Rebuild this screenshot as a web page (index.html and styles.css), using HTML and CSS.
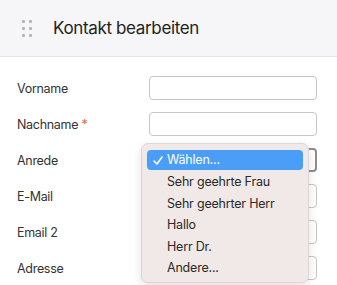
FILE: index.html
```html
<!DOCTYPE html>
<html lang="de">
<head>
    <meta charset="UTF-8" />
    <meta name="viewport" content="width=device-width, initial-scale=1.0"/>
    <title>Kontakt bearbeiten</title>
    <link rel="stylesheet" href="styles.css">
</head>
<body>
<header class="panel-head">
    <svg class="grip" width="10" height="18" viewBox="0 0 10 18">
        <rect x="0" y="0" width="3" height="3" rx="1"/>
        <rect x="7" y="0" width="3" height="3" rx="1"/>
        <rect x="0" y="7" width="3" height="3" rx="1"/>
        <rect x="7" y="7" width="3" height="3" rx="1"/>
        <rect x="0" y="14" width="3" height="3" rx="1"/>
        <rect x="7" y="14" width="3" height="3" rx="1"/>
    </svg>
    <h1>Kontakt bearbeiten</h1>
</header>

<form class="contact-form">
    <div class="row">
        <label for="firstName">Vorname</label>
        <input type="text" id="firstName">
    </div>
    <div class="row">
        <label for="lastName">Nachname <span class="req">*</span></label>
        <input type="text" id="lastName">
    </div>
    <div class="row">
        <label for="salutation">Anrede</label>
        <div class="select-box focused" id="salutation"></div>
        <ul class="menu">
            <li class="active">
                <svg class="check" width="10" height="9" viewBox="0 0 10 9"><path d="M1 5 L4 8 L9 1"/></svg>Wählen...
            </li>
            <li>Sehr geehrte Frau</li>
            <li>Sehr geehrter Herr</li>
            <li>Hallo</li>
            <li>Herr Dr.</li>
            <li>Andere...</li>
        </ul>
    </div>
    <div class="row">
        <label for="email">E-Mail</label>
        <input type="text" id="email">
    </div>
    <div class="row">
        <label for="email2">Email 2</label>
        <input type="text" id="email2">
    </div>
    <div class="row">
        <label for="address">Adresse</label>
        <input type="text" id="address">
    </div>
</form>
</body>
</html>
```

FILE: styles.css
```css
body {
    font-family: 'Inter', 'Liberation Sans', sans-serif;
    margin: 0;
    padding: 0;
    background-color: #fff;
    color: #333;
    overflow: hidden;
}

.panel-head {
    height: 56px;
    background-color: #f6f6f8;
    border-bottom: 1px solid #e6e6e8;
    display: flex;
    align-items: center;
    padding-left: 22px;
}

.grip {
    fill: #b4b4b8;
    margin-right: 21px;
    margin-top: 1px;
}

.panel-head h1 {
    margin: 0;
    font-size: 17px;
    font-weight: 400;
    letter-spacing: -0.35px;
    color: #222;
}

.contact-form {
    padding: 13px 20px 0 17px;
}

.row {
    position: relative;
    height: 36px;
    display: grid;
    grid-template-columns: 132px 168px;
    align-items: center;
}

.row label {
    font-size: 12.5px;
    letter-spacing: -0.3px;
    color: #333;
}

.req {
    color: #f0603f;
}

.row input, .select-box {
    height: 24px;
    border: 1px solid #c6c6c6;
    border-radius: 4px;
    box-sizing: border-box;
    background: #fff;
    margin: 0;
}

.select-box.focused {
    border: 2px solid #8e8e8e;
}

.menu {
    position: absolute;
    z-index: 10;
    left: 124px;
    top: 1px;
    width: 168px;
    margin: 0;
    padding: 6px 5px 4px;
    box-sizing: border-box;
    list-style: none;
    background: #f0e9e7;
    border: 1px solid #ddd6d4;
    border-radius: 7px;
    box-shadow: 0 3px 10px rgba(0,0,0,0.12);
    font-size: 12.5px;
    letter-spacing: -0.2px;
    color: #2a2a2a;
}

.menu li {
    height: 21.4px;
    line-height: 21px;
    padding-left: 20px;
    position: relative;
}

.menu li.active {
    height: 20px;
    line-height: 20px;
    background: #4a9ef8;
    color: #fff;
    border-radius: 4px;
    margin-bottom: 1.4px;
}

.check {
    position: absolute;
    left: 6px;
    top: 6px;
    fill: none;
    stroke: #fff;
    stroke-width: 1.6;
    stroke-linecap: round;
    stroke-linejoin: round;
}
```
